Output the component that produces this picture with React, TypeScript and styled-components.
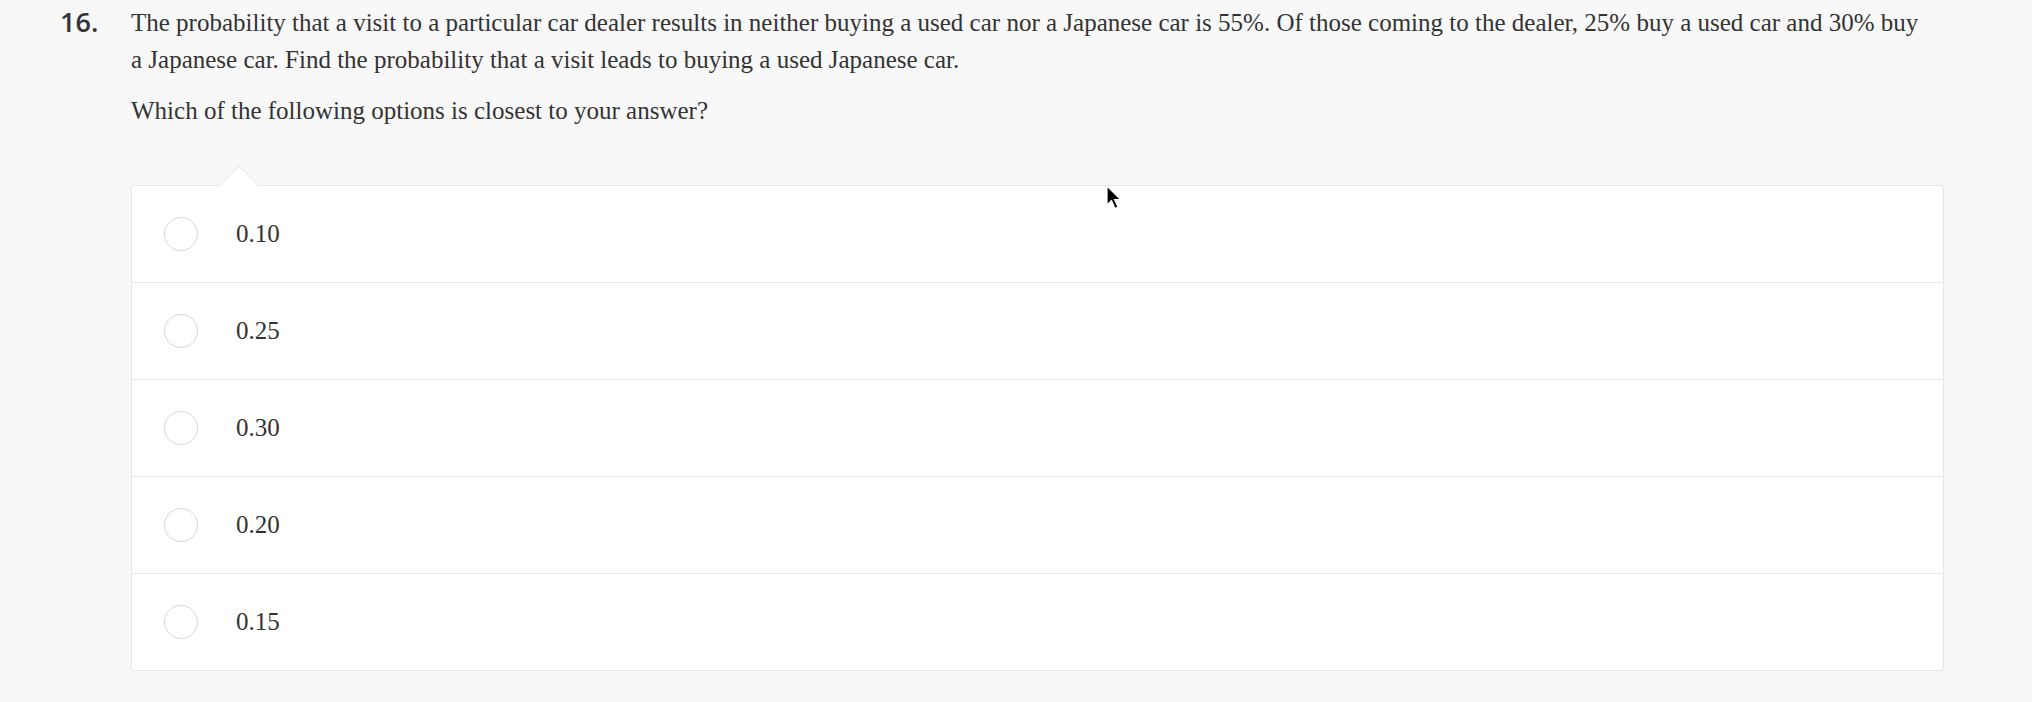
import React from "react";
import styled, { createGlobalStyle } from "styled-components";

const Global = createGlobalStyle`
  html, body { margin: 0; padding: 0; background: #f8f8f8; }
  body { font-family: "Liberation Serif", "Times New Roman", serif; color: #333; }
`;

const Page = styled.div`
  width: 2032px;
  height: 702px;
  position: relative;
  overflow: hidden;
  display: flex;
  padding: 4px 0 0 60px;
  box-sizing: border-box;
`;

const Number = styled.div`
  width: 71px;
  flex: none;
  font-family: "Open Sans", "Noto Sans", sans-serif;
  font-weight: 600;
  font-size: 27px;
  line-height: 36px;
  color: #333;
`;

const Body = styled.div`
  width: 1813px;
  flex: none;
`;

const Para = styled.p`
  margin: 0 0 14px;
  max-width: 1800px;
  font-size: 25px;
  line-height: 37px;
  color: #333;
`;

const OptionsWrap = styled.div`
  position: relative;
  margin-top: 56px;
`;

const Notch = styled.div`
  position: absolute;
  top: -14px;
  left: 94px;
  width: 27px;
  height: 27px;
  background: #fff;
  border-left: 1px solid #e6e6e6;
  border-top: 1px solid #e6e6e6;
  transform: rotate(45deg);
  z-index: 1;
`;

const Card = styled.div`
  background: #fff;
  border: 1px solid #e6e6e6;
  border-radius: 3px;
  display: flex;
  flex-direction: column;
`;

const Row = styled.label`
  position: relative;
  z-index: 2;
  height: 96px;
  display: flex;
  align-items: center;
  padding-left: 32px;
  & + & { border-top: 1px solid #e6e6e6; }
`;

const Radio = styled.span`
  width: 34px;
  height: 34px;
  box-sizing: border-box;
  border-radius: 50%;
  border: 1px solid #d6d6d6;
  background: #fff;
  flex: none;
`;

const OptionText = styled.span`
  margin-left: 38px;
  font-size: 25px;
  color: #333;
`;

const Cursor = styled.svg`
  position: absolute;
  left: 1106px;
  top: 185px;
  z-index: 5;
`;

const options = ["0.10", "0.25", "0.30", "0.20", "0.15"];

export default function App() {
  return (
    <>
      <Global />
      <Page>
        <Number>16.</Number>
        <Body>
          <Para>
            The probability that a visit to a particular car dealer results in neither buying a used car nor a Japanese car is 55%. Of those coming to the dealer, 25% buy a used car and 30% buy a Japanese car. Find the probability that a visit leads to buying a used Japanese car.
          </Para>
          <Para>Which of the following options is closest to your answer?</Para>
          <OptionsWrap>
            <Notch />
            <Card>
              {options.map((o) => (
                <Row key={o}>
                  <Radio />
                  <OptionText>{o}</OptionText>
                </Row>
              ))}
            </Card>
          </OptionsWrap>
        </Body>
        <Cursor width="18" height="26" viewBox="0 0 18 26">
          <path d="M1 1 L1 20 L5.5 15.5 L9 23.5 L12 22 L8.5 14.5 L14.5 14.5 Z" fill="#000" stroke="#fff" strokeWidth="1.2" />
        </Cursor>
      </Page>
    </>
  );
}
